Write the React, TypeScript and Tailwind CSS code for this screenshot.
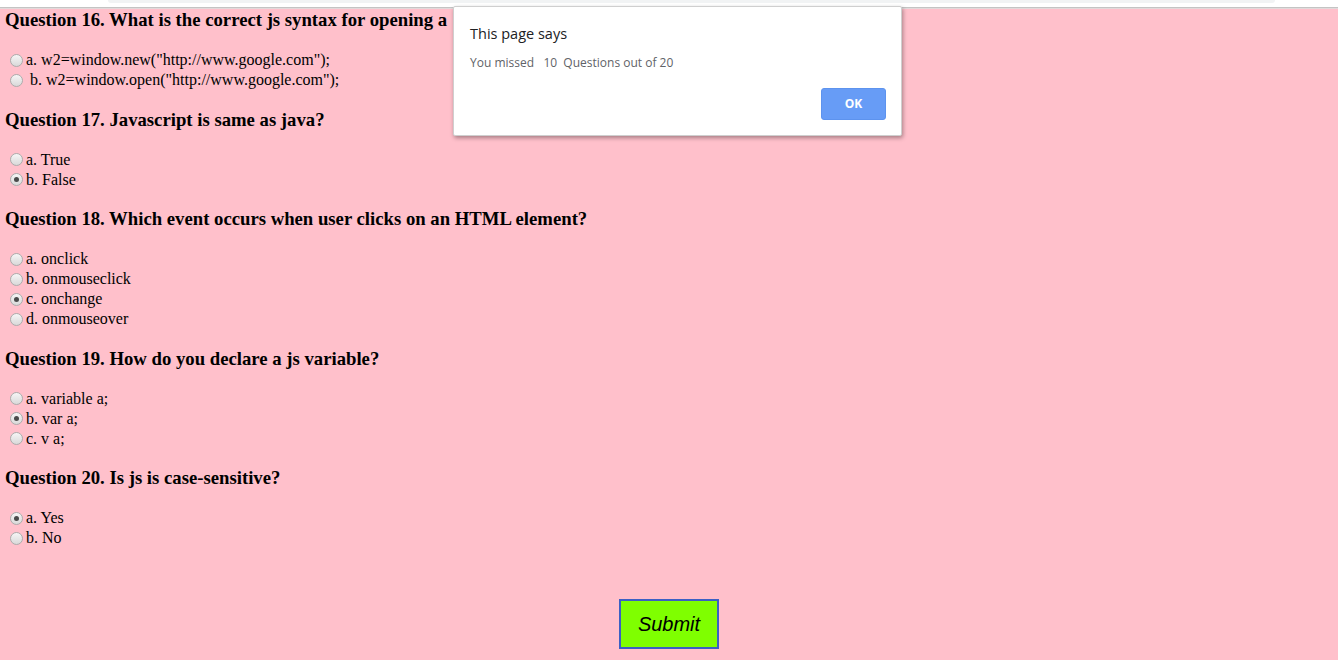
const questions = [
  {
    title: "Question 16. What is the correct js syntax for opening a",
    options: [
      { label: 'a. w2=window.new("http://www.google.com");', checked: false },
      { label: '\u00a0b. w2=window.open("http://www.google.com");', checked: false },
    ],
  },
  {
    title: "Question 17. Javascript is same as java?",
    options: [
      { label: "a. True", checked: false },
      { label: "b. False", checked: true },
    ],
  },
  {
    title: "Question 18. Which event occurs when user clicks on an HTML element?",
    options: [
      { label: "a. onclick", checked: false },
      { label: "b. onmouseclick", checked: false },
      { label: "c. onchange", checked: true },
      { label: "d. onmouseover", checked: false },
    ],
  },
  {
    title: "Question 19. How do you declare a js variable?",
    options: [
      { label: "a. variable a;", checked: false },
      { label: "b. var a;", checked: true },
      { label: "c. v a;", checked: false },
    ],
  },
  {
    title: "Question 20. Is js is case-sensitive?",
    options: [
      { label: "a. Yes", checked: true },
      { label: "b. No", checked: false },
    ],
  },
];

function Radio({ checked }: { checked: boolean }) {
  return (
    <span className="ml-[5px] mr-[3px] flex h-[13px] w-[13px] items-center justify-center rounded-full border border-[#acacac] bg-gradient-to-b from-[#f6f6f6] to-[#d9d9d9]">
      {checked && <span className="h-[5px] w-[5px] rounded-full bg-[#4a4a4a]" />}
    </span>
  );
}

export default function App() {
  return (
    <div className="relative min-h-screen w-[1338px] overflow-hidden bg-white">
      {/* browser chrome strip */}
      <div className="h-[7px] bg-white">
        <div className="ml-[108px] h-[3px] w-[1167px] rounded-b-lg bg-[#f1f3f4]" />
      </div>
      <div className="h-[1px] bg-[#c4c4c4]" />
      <div className="h-[1px] bg-[#e2dadb]" />

      <div
        className="min-h-[651px] bg-[#ffc0cb] pl-[6px] text-black"
        style={{ fontFamily: '"Liberation Serif", "Times New Roman", serif' }}
      >
        {questions.map((q, i) => (
          <div key={q.title}>
            <h3
              className={`-ml-[1px] mb-[19.5px] text-[18.72px] leading-[21.5px] font-bold whitespace-nowrap ${
                i === 0 ? "mt-0" : "mt-[18.5px]"
              }`}
            >
              {q.title}
            </h3>
            {q.options.map((o) => (
              <div key={o.label} className="-ml-[1px] flex h-[20px] items-center text-[16px]">
                <Radio checked={o.checked} />
                <span className="whitespace-pre">{o.label}</span>
              </div>
            ))}
          </div>
        ))}

        <div className="flex justify-center pt-[51px] pr-[6px]">
          <button
            className="h-[50px] w-[100px] border-2 border-[#3b5fc4] bg-[#7fff00] text-[20px] italic text-black"
            style={{ fontFamily: '"Liberation Sans", Arial, sans-serif' }}
          >
            Submit
          </button>
        </div>
      </div>

      {/* alert dialog */}
      <div
        className="absolute top-[6px] left-[453px] h-[130px] w-[449px] rounded-[2px] border border-[#cfcfcf] bg-white shadow-[1px_2px_4px_rgba(0,0,0,0.35)]"
        style={{ fontFamily: '"Open Sans", "Noto Sans", sans-serif' }}
      >
        <div className="pt-[16px] pl-[16px] text-[14.5px] leading-[22px] text-[#202124]">
          This page says
        </div>
        <div className="pt-[9px] pl-[16px] text-[12px] leading-[18px] whitespace-pre text-[#5f6368]">
          {"You missed   10  Questions out of 20"}
        </div>
        <div className="flex justify-end pt-[16px] pr-[15px]">
          <button className="h-[32px] w-[65px] rounded-[3px] border border-[#5d93ee] bg-[#679cf6] text-[12px] font-bold text-white">
            OK
          </button>
        </div>
      </div>
    </div>
  );
}
